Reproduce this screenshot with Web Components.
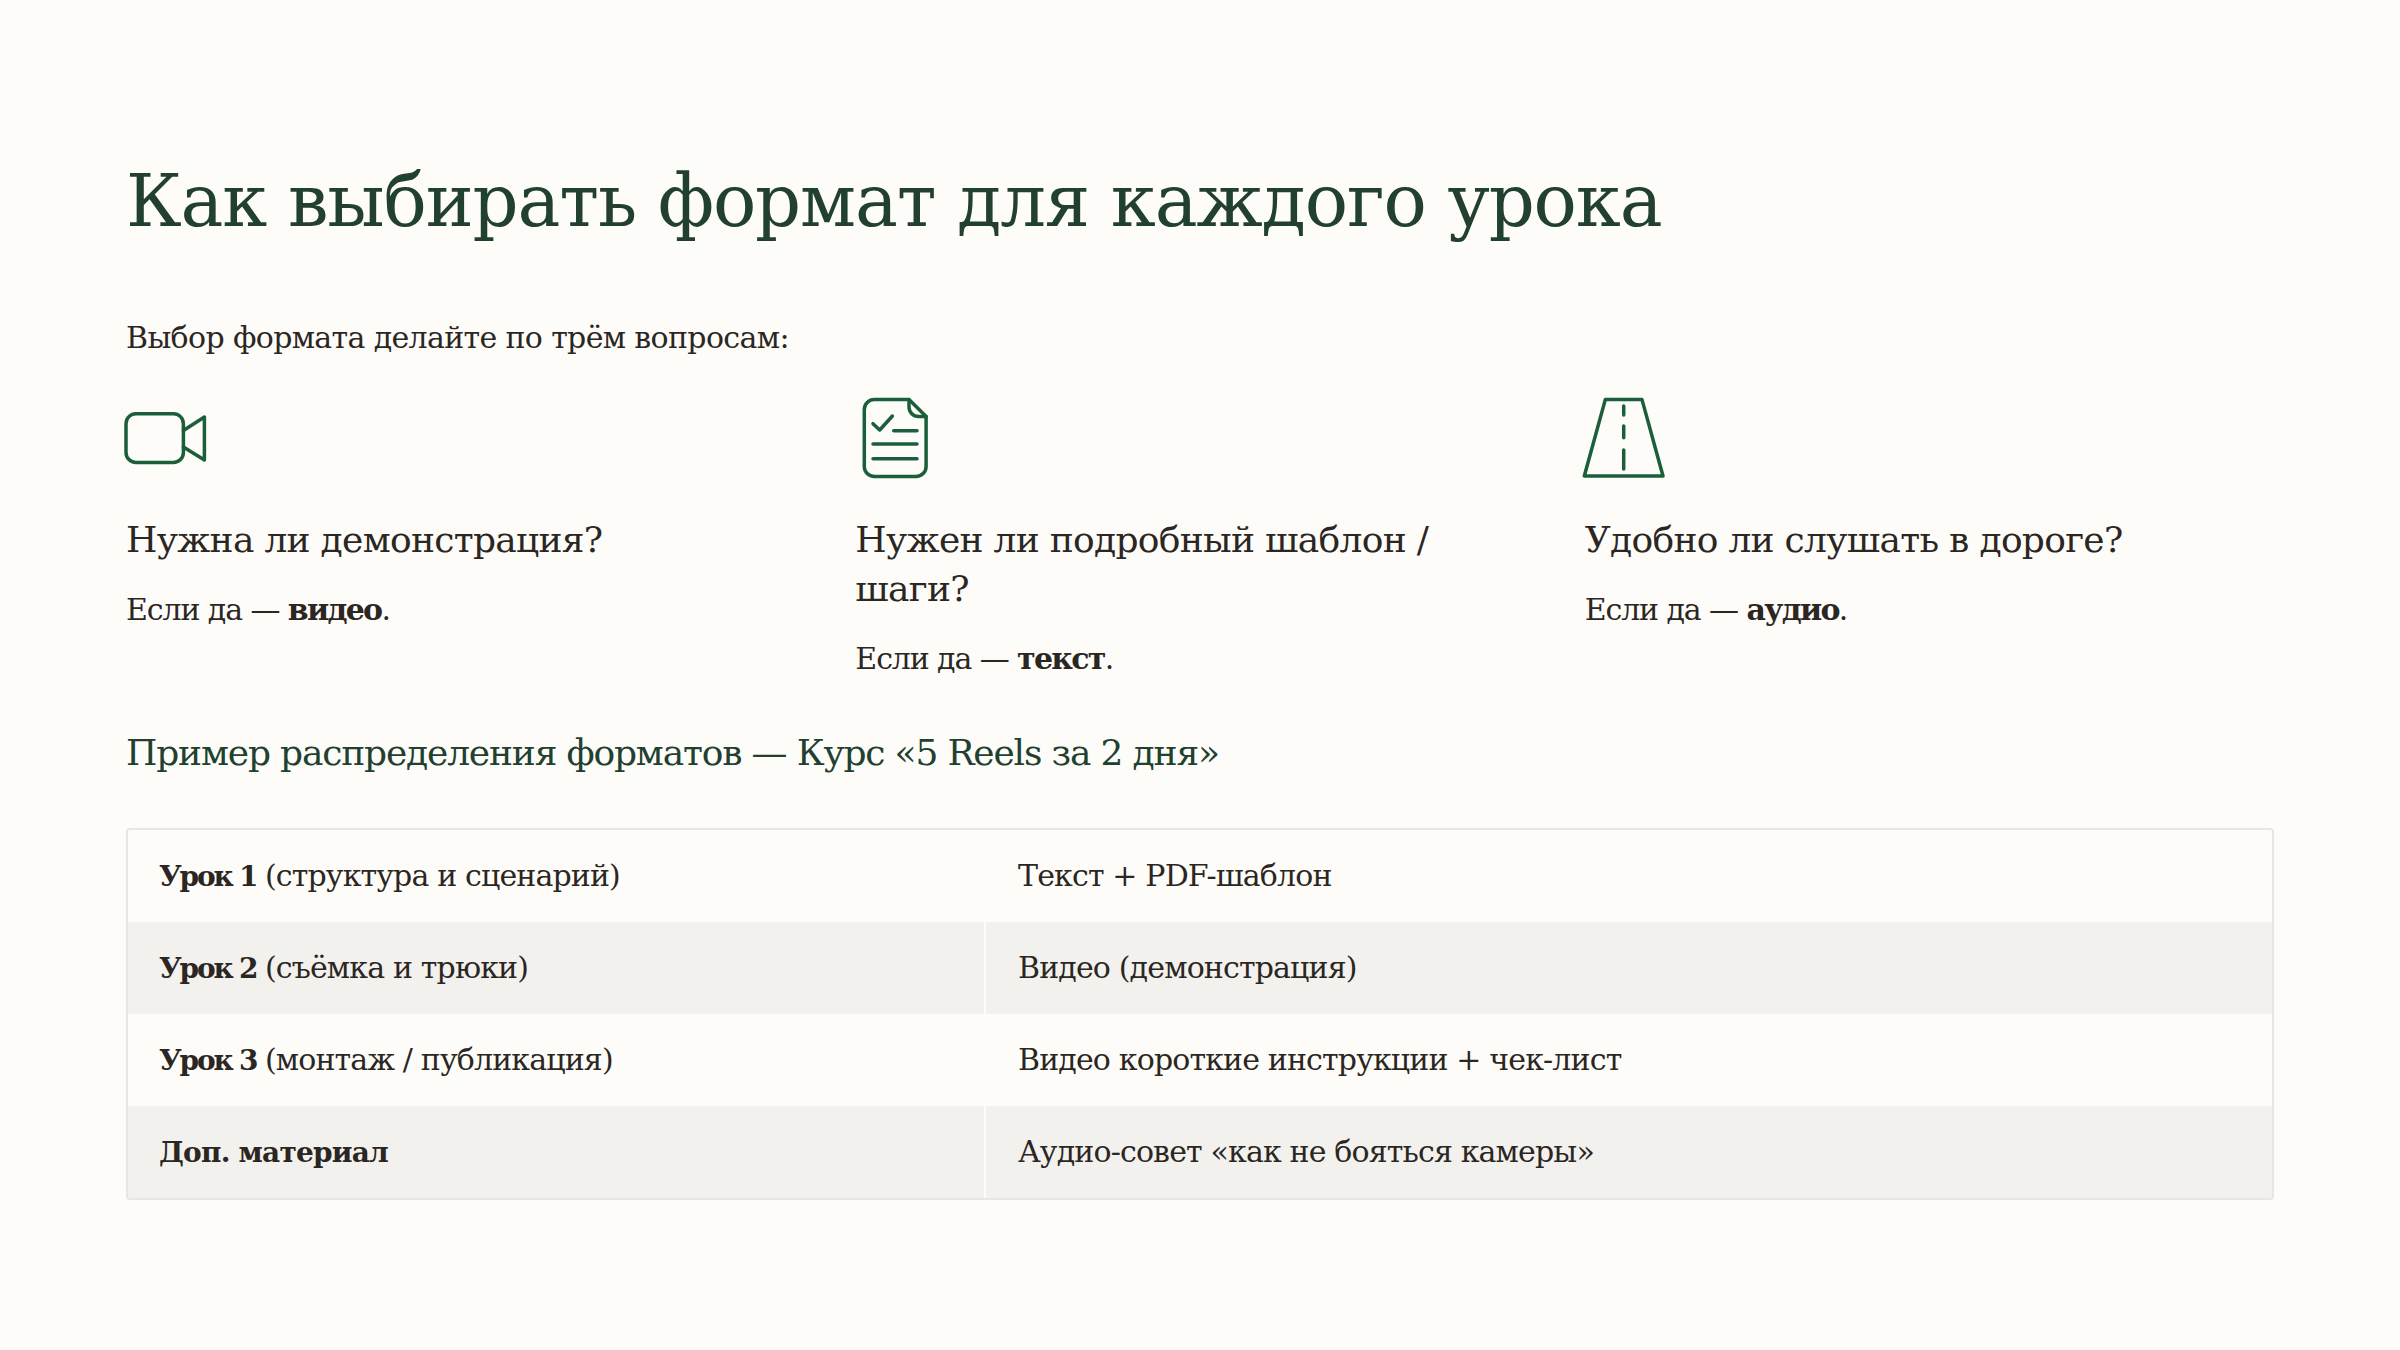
<!DOCTYPE html><html lang="ru"><head><meta charset="utf-8"><style>
html,body{margin:0;background:#fdfcf9}
body{width:2400px;height:1350px;overflow:hidden;font-family:"DejaVu Serif",serif;color:#2b2622}
x-feature b{letter-spacing:-1.7px}
x-row b{font-size:28px;letter-spacing:-2.2px;margin-left:-1px}
x-row:last-child b{letter-spacing:-.8px}
</style></head><body>
<x-slide>
<x-title>Как выбирать формат для каждого урока</x-title>
<x-lead>Выбор формата делайте по трём вопросам:</x-lead>
<x-columns>
<x-feature>
<svg slot="icon" viewBox="0 0 80 80"><rect x="0" y="15.7" width="57.4" height="48.7" rx="10"/><path d="M57.4 32.5 78.4 19V62L57.4 49"/></svg>
<span slot="q">Нужна ли демонстрация?</span>
Если да — <b>видео</b>.
</x-feature>
<x-feature>
<svg slot="icon" viewBox="0 0 80 80"><path d="M54 1.6H19.3a10 10 0 0 0-10 10V68.4a10 10 0 0 0 10 10H61.1a10 10 0 0 0 10-10V18.6Z"/><path d="M54 1.6V9a9.6 9.6 0 0 0 9.6 9.6H71.1"/><path d="M18 25.7 24.7 32 37.4 18M38.7 32.7H62M18 46H62M18 60.7H62"/></svg>
<span slot="q">Нужен ли подробный шаблон / шаги?</span>
Если да — <b>текст</b>.
</x-feature>
<x-feature>
<svg slot="icon" viewBox="0 0 80 80"><path d="M20.3 1.6H57L78 78H-.7Z"/><path d="M38.7 8V17M38.7 28V39.7M38.7 52V71"/></svg>
<span slot="q">Удобно ли слушать в дороге?</span>
Если да — <b>аудио</b>.
</x-feature>
</x-columns>
<x-section>Пример распределения форматов — Курс «5 Reels за 2 дня»</x-section>
<x-table>
<x-row><span slot="a"><b>Урок 1</b> (структура и сценарий)</span><span slot="b">Текст + PDF-шаблон</span></x-row>
<x-row alt><span slot="a"><b>Урок 2</b> (съёмка и трюки)</span><span slot="b">Видео (демонстрация)</span></x-row>
<x-row><span slot="a"><b>Урок 3</b> (монтаж / публикация)</span><span slot="b">Видео короткие инструкции + чек-лист</span></x-row>
<x-row alt><span slot="a"><b>Доп. материал</b></span><span slot="b">Аудио-совет «как не бояться камеры»</span></x-row>
</x-table>
</x-slide>
<script>
function def(name,html){customElements.define(name,class extends HTMLElement{constructor(){super();this.attachShadow({mode:"open"}).innerHTML=html}})}
def("x-slide",`<style>:host{display:flex;flex-direction:column;box-sizing:border-box;width:2400px;height:1350px;padding:158px 126px 0}</style><slot></slot>`);
def("x-title",`<style>:host{display:block;font-size:72px;line-height:86px;letter-spacing:-1.15px;color:#21402f;margin-bottom:73px}</style><slot></slot>`);
def("x-lead",`<style>:host{display:block;font-size:30px;line-height:42px;letter-spacing:-.65px;margin-bottom:39px}</style><slot></slot>`);
def("x-columns",`<style>:host{display:grid;grid-template-columns:repeat(3,1fr);column-gap:40px}</style><slot></slot>`);
def("x-feature",`<style>:host{display:flex;flex-direction:column;font-size:30px;line-height:42px;letter-spacing:-1.1px}
::slotted(svg){width:80px;height:80px;overflow:visible;fill:none;stroke:#1a5e3a;stroke-width:3.5;stroke-linecap:round;stroke-linejoin:round;margin-bottom:37px}
.q{font-size:36px;line-height:49px;letter-spacing:-.7px;margin-bottom:25px}</style><slot name="icon"></slot><div class="q"><slot name="q"></slot></div><div><slot></slot></div>`);
def("x-section",`<style>:host{display:block;font-size:36px;line-height:49px;letter-spacing:-1.17px;color:#21402f;margin:48px 0 51px}</style><slot></slot>`);
def("x-table",`<style>:host{display:block;border:2px solid #e8e6e2;border-radius:4px;overflow:hidden}</style><slot></slot>`);
def("x-row",`<style>:host{display:grid;grid-template-columns:856px 1fr;column-gap:2px;font-size:30px;line-height:42px;letter-spacing:-.85px}
.c{padding:25px 32px;height:42px}:host([alt]) .c{background:#f2f1ee}</style><div class="c"><slot name="a"></slot></div><div class="c"><slot name="b"></slot></div>`);
</script></body></html>
